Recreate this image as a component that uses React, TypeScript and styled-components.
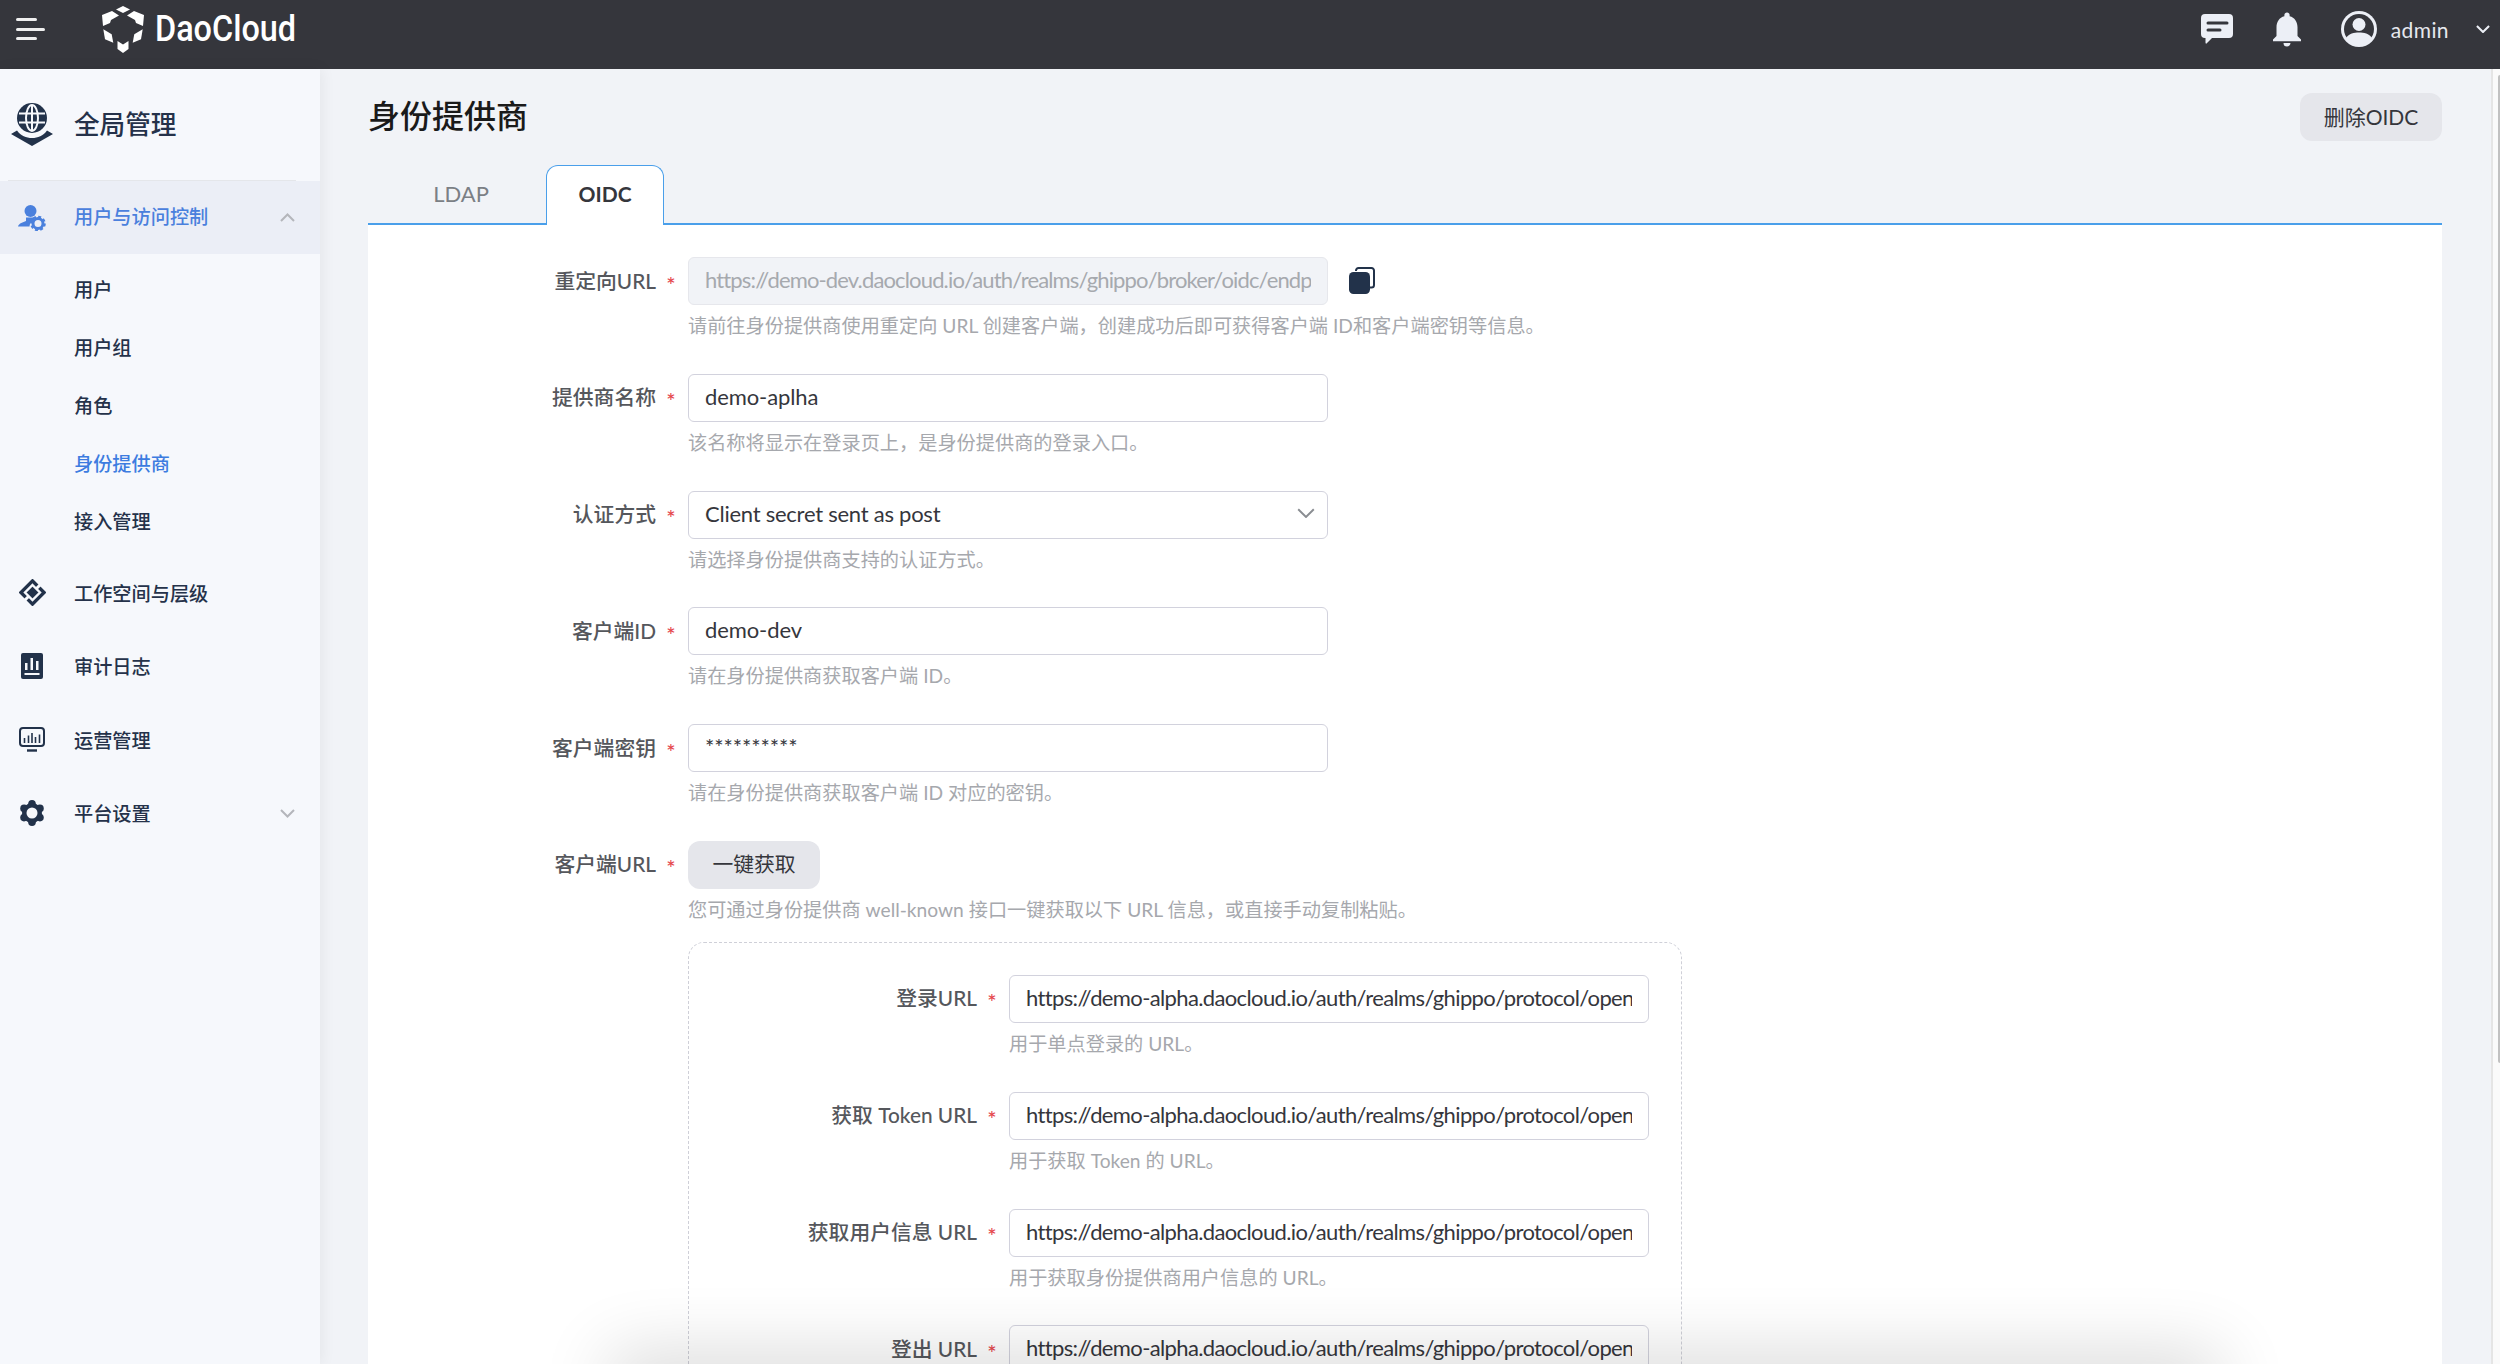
import React from "react";
import styled, { createGlobalStyle } from "styled-components";
import { MdNotifications } from "react-icons/md";

const FONT = `Lato, "Noto Sans CJK SC", sans-serif`;

const GlobalStyle = createGlobalStyle`
  html, body {
    margin: 0;
    padding: 0;
    background: #f1f3f7;
    font-family: ${FONT};
  }
  * {
    box-sizing: border-box;
  }
`;

const Page = styled.div`
  display: flex;
  flex-direction: column;
  height: 100vh;
  overflow: hidden;
  position: relative;
`;

const TopBar = styled.header`
  flex: 0 0 69px;
  display: flex;
  align-items: center;
  padding-bottom: 11px;
  background: #35363c;
  color: #eceff6;
`;

const Burger = styled.div`
  display: flex;
  flex-direction: column;
  gap: 6.5px;
  margin-left: 16px;
  width: 29px;
`;

const BurgerBar = styled.span<{ $w: number }>`
  display: block;
  height: 3px;
  border-radius: 2px;
  background: #f0f0f0;
  width: ${(p) => p.$w}px;
`;

const Logo = styled.div`
  display: flex;
  align-items: center;
  margin-left: 56px;
`;

const LogoText = styled.span`
  display: inline-block;
  font-family: Roboto, sans-serif;
  font-weight: 500;
  font-size: 36px;
  color: #fff;
  margin-left: 10px;
  transform: scaleX(0.9);
  transform-origin: left center;
`;

const TopRight = styled.div`
  margin-left: auto;
  display: flex;
  align-items: center;
  padding-right: 10px;
`;

const Bell = styled(MdNotifications)`
  margin: 0 33px;
  color: #eceff6;
`;

const UserName = styled.span`
  font-size: 21px;
  color: #e6e8ee;
  margin-left: 14px;
  margin-right: 27px;
  letter-spacing: 0.4px;
`;

const Body = styled.div`
  flex: 1;
  display: flex;
  min-height: 0;
`;

const Sidebar = styled.aside`
  flex: 0 0 320px;
  background: #f6f8fc;
  box-shadow: 2px 0 14px rgba(0, 0, 0, 0.06);
  position: relative;
  z-index: 1;
`;

const SideHead = styled.div`
  height: 112px;
  margin: 0 24px 0 8px;
  display: flex;
  align-items: center;
  border-bottom: 1px solid #e4e6ea;
  font-size: 25.6px;
  font-weight: 500;
  color: #25324a;
`;

const SideHeadTitle = styled.span`
  margin-bottom: 5px;
`;

const SideHeadIcon = styled.svg`
  width: 42px;
  height: 43px;
  margin: 0 21px 0 3px;
`;

const NavItem = styled.div<{ $active?: boolean }>`
  height: ${(p) => (p.$active ? "73px" : "73.5px")};
  display: flex;
  align-items: center;
  font-size: 19.2px;
  font-weight: 500;
  color: ${(p) => (p.$active ? "#4a80dd" : "#25324a")};
  background: ${(p) => (p.$active ? "#ebeef6" : "transparent")};
  padding-right: 25px;
`;

const NavLabel = styled.span<{ $active?: boolean }>`
  margin-bottom: ${(p) => (p.$active ? "3px" : "0")};
`;

const NavIcon = styled.span`
  width: 28px;
  margin: 0 28px 0 18px;
  display: flex;
  justify-content: center;
  align-items: center;
`;

const NavChevron = styled.span`
  margin-left: auto;
  display: flex;
  color: #b4b6bb;
`;

const SubList = styled.div`
  padding: 5.5px 0 6.5px;
`;

const SubItem = styled.div<{ $active?: boolean }>`
  height: 58px;
  display: flex;
  align-items: center;
  padding-left: 74px;
  font-size: 19.2px;
  font-weight: 500;
  color: ${(p) => (p.$active ? "#3d7ce0" : "#25324a")};
`;

const Main = styled.main`
  flex: 1;
  min-width: 0;
  padding: 24px 49px 0 48px;
  overflow: hidden;
`;

const TitleRow = styled.div`
  display: flex;
  align-items: center;
  justify-content: space-between;
  height: 48px;
`;

const Title = styled.h1`
  margin: 0 0 6px;
  font-size: 32px;
  font-weight: 500;
  color: #1a1a1a;
`;

const GreyButton = styled.button`
  height: 48px;
  width: 142px;
  padding: 0 0 3px;
  border: none;
  border-radius: 12px;
  background: #e5e6eb;
  color: #35363c;
  font-family: ${FONT};
  font-size: 21px;
`;

const Tabs = styled.div`
  display: flex;
  margin-top: 24px;
  height: 60px;
  border-bottom: 2px solid #4a9fea;
`;

const Tab = styled.div<{ $active?: boolean }>`
  width: ${(p) => (p.$active ? "118px" : "178px")};
  height: ${(p) => (p.$active ? "60px" : "58px")};
  display: flex;
  align-items: center;
  justify-content: center;
  padding: ${(p) => (p.$active ? "0 0 4px" : "0 0 2px 8px")};
  font-size: ${(p) => (p.$active ? "21px" : "22px")};
  font-weight: ${(p) => (p.$active ? 700 : 400)};
  color: ${(p) => (p.$active ? "#35363c" : "#7b7f85")};
  background: ${(p) => (p.$active ? "#fff" : "transparent")};
  border: ${(p) => (p.$active ? "1.5px solid #4a9fea" : "none")};
  border-bottom: none;
  border-radius: 12px 12px 0 0;
`;

const Panel = styled.section`
  background: #fff;
  padding-top: 32px;
  height: 1300px;
`;

const FormItem = styled.div`
  display: grid;
  grid-template-columns: 320px 640px;
  margin-bottom: 34.8px;
`;

const Label = styled.label`
  height: 48px;
  display: flex;
  align-items: center;
  justify-content: flex-end;
  padding-bottom: 3px;
  font-size: 20.8px;
  font-weight: 500;
  color: #55575c;
`;

const Star = styled.span`
  width: 30px;
  margin-right: 2px;
  padding-top: 10px;
  text-align: center;
  font-size: 22px;
  line-height: 24px;
  color: #e5484d;
`;

const TextInput = styled.input<{ $spacing?: number }>`
  display: block;
  width: 100%;
  height: 48px;
  padding: 0 16px 3px;
  border: 1.5px solid #d2d2dd;
  border-radius: 6px;
  background: #fff;
  color: #35363c;
  font-family: ${FONT};
  font-size: 22px;
  letter-spacing: ${(p) => p.$spacing ?? -0.1}px;
  outline: none;
  &:disabled {
    background: #f1f3f7;
    border-color: #e6e7ec;
    color: #a6a9ae;
  }
`;

const SelectBox = styled.div`
  height: 48px;
  display: flex;
  align-items: center;
  justify-content: space-between;
  padding: 0 12px 3px 16px;
  border: 1.5px solid #d2d2dd;
  border-radius: 6px;
  color: #35363c;
  font-size: 22px;
  letter-spacing: -0.25px;
`;

const SelectArrow = styled.span`
  display: flex;
  color: #8a8d92;
`;

const Help = styled.div`
  margin-top: 8px;
  height: 26px;
  line-height: 26px;
  font-size: 19.2px;
  color: #a6a8ad;
  white-space: nowrap;
`;

const InputWrap = styled.div`
  position: relative;
`;

const CopyIcon = styled.svg`
  position: absolute;
  left: 661px;
  top: 10px;
  width: 26px;
  height: 27px;
`;

const FetchButton = styled(GreyButton)`
  display: block;
  width: 132px;
  font-size: 20.8px;
`;

const UrlBox = styled.div`
  margin-top: 19px;
  width: 994px;
  padding-top: 32px;
  border: 1px dashed #cfd0d8;
  border-radius: 16px;
`;

const ScrollTrack = styled.div`
  flex: 0 0 9px;
  background: #fafafa;
  border-left: 2px solid #e5e5e5;
  padding: 6px 0 0 5px;
`;

const ScrollThumb = styled.div`
  width: 2px;
  height: 988px;
  background: #c1c1c1;
  border-radius: 2px 0 0 2px;
`;

const BottomShade = styled.div`
  position: absolute;
  left: 620px;
  right: 290px;
  bottom: -40px;
  height: 40px;
  pointer-events: none;
  box-shadow: 0 0 70px 10px rgba(0, 0, 0, 0.16);
`;

const DARK = "#22324a";

const Chevron = ({ up, size, width = 2 }: { up?: boolean; size: number; width?: number }) => (
  <svg width={size} height={size * 0.6} viewBox="0 0 15 9" fill="none" stroke="currentColor" strokeWidth={width}>
    <path d={up ? "M1 8L7.500 1.500L14 8" : "M1 1L7.500 7.500L14 1"} />
  </svg>
);

const LogoMark = () => (
  <svg width="44" height="47" viewBox="0 0 44 47" fill="#fff">
    <path d="M22 0L29 3.500L22 7L15 3.500Z" />
    <path d="M1 9L11 5L18 9.500L10 14L9 17L2 20Z" />
    <path d="M43 9L33 5L26 9.500L34 14L35 17L42 20Z" />
    <path d="M2.300 23.300L10.700 28.300L12.300 36.700L4 33.300Z" />
    <path d="M41.700 23.300L33.300 28.300L31.700 36.700L40 33.300Z" />
    <path d="M16.500 35L22 38.500L27.500 35V43L22 47L16.500 43Z" />
  </svg>
);

const ChatIcon = () => (
  <svg width="32" height="30" viewBox="0 0 32 30">
    <path
      fill="#eceff6"
      d="M4 0H28a4 4 0 0 1 4 4V20a4 4 0 0 1-4 4H11L5.500 29.500Q4.500 30 4.500 28.500V24H4a4 4 0 0 1-4-4V4a4 4 0 0 1 4-4Z"
    />
    <path stroke="#35363c" strokeWidth="3" strokeLinecap="round" d="M7 9H26M7 16H19" />
  </svg>
);

const AvatarIcon = () => (
  <svg width="36" height="36" viewBox="0 0 36 36">
    <circle cx="18" cy="18" r="18" fill="#eceff6" />
    <circle cx="18" cy="18" r="15" fill="#35363c" />
    <circle cx="18" cy="13.500" r="6.500" fill="#eceff6" />
    <path fill="#eceff6" d="M5 27C8 22.500 13 21.500 18 21.500S28 22.500 31 27L26 33H10Z" />
  </svg>
);

const GlobeIcon = () => (
  <SideHeadIcon viewBox="0 0 42 43">
    <circle cx="21" cy="15" r="15" fill={DARK} />
    <g fill="none" stroke="#f6f8fc" strokeWidth="2">
      <ellipse cx="21" cy="15" rx="6" ry="13" />
      <path d="M8 10.500H34M8 19.500H34M21 2V28" />
    </g>
    <path fill={DARK} d="M0 31L6 27.500C10 33 15 35 21 35S32 33 36 27.500L42 31L21 43Z" />
  </SideHeadIcon>
);

const UserGearIcon = () => (
  <svg width="28" height="26" viewBox="0 0 28 26" fill="#4a80dd">
    <circle cx="12.500" cy="6" r="6" />
    <path d="M0 21.500C1 18 5 17.500 8 16V12.500H16V15C13 17 11.500 19 11.500 21.500Z" />
    <circle cx="20" cy="18.500" r="5" fill="none" stroke="#4a80dd" strokeWidth="3" />
    <circle cx="20" cy="18.500" r="6.800" fill="none" stroke="#4a80dd" strokeWidth="2" strokeDasharray="3 2.340" />
  </svg>
);

const DiamondIcon = () => (
  <svg width="27" height="27" viewBox="0 0 27 27">
    <path fill={DARK} stroke={DARK} strokeLinejoin="round" strokeWidth="2" d="M13.500 1L26 13.500L13.500 26L1 13.500Z" />
    <path fill="none" stroke="#f6f8fc" strokeWidth="2.400" d="M13.500 6L21 13.500L13.500 21L6 13.500Z" />
    <path stroke="#f6f8fc" strokeWidth="3" d="M17 10L24 3M10 17L3 24" />
  </svg>
);

const AuditIcon = () => (
  <svg width="22" height="26" viewBox="0 0 22 26">
    <rect width="22" height="26" rx="2" fill={DARK} />
    <path fill="#f6f8fc" d="M4 10H6.500V17H4ZM9.500 5H12V17H9.500ZM15 8H17.500V17H15ZM3.500 20H18.500V22H3.500Z" />
  </svg>
);

const OpsIcon = () => (
  <svg width="26" height="25" viewBox="0 0 26 25" fill="none" stroke={DARK} strokeWidth="2">
    <rect x="1" y="1" width="24" height="18" rx="3" />
    <path d="M5.500 16V11M9.500 16V8.500M13 16V6M16.500 16V10M20.500 16V7.500" strokeWidth="1.600" />
    <path d="M8 23.500H18" strokeWidth="2.400" />
  </svg>
);

const GearIcon = () => (
  <svg width="26" height="26" viewBox="0 0 26 26" fill={DARK}>
    <circle cx="13" cy="13" r="10" />
    {[30, 90, 150, 210, 270, 330].map((a) => (
      <circle
        key={a}
        cx={13 + 9.2 * Math.cos((a * Math.PI) / 180)}
        cy={13 + 9.2 * Math.sin((a * Math.PI) / 180)}
        r="3.800"
      />
    ))}
    <circle cx="13" cy="13" r="5.500" fill="#f6f8fc" />
  </svg>
);

type Field = { label: string; value: string; help: string };

const BASE_URL = "https://demo-alpha.daocloud.io/auth/realms/ghippo/protocol/openid-connect";

const urlFields: Field[] = [
  { label: "登录URL", value: `${BASE_URL}/auth`, help: "用于单点登录的 URL。" },
  { label: "获取 Token URL", value: `${BASE_URL}/token`, help: "用于获取 Token 的 URL。" },
  { label: "获取用户信息 URL", value: `${BASE_URL}/userinfo`, help: "用于获取身份提供商用户信息的 URL。" },
  { label: "登出 URL", value: `${BASE_URL}/logout`, help: "用于单点登出的 URL。" },
];

const subItems = ["用户", "用户组", "角色", "身份提供商", "接入管理"];

function FieldLabel({ children }: { children: React.ReactNode }) {
  return (
    <Label>
      {children}
      <Star>*</Star>
    </Label>
  );
}

export default function App() {
  return (
    <Page>
      <GlobalStyle />
      <TopBar>
        <Burger>
          <BurgerBar $w={21} />
          <BurgerBar $w={29} />
          <BurgerBar $w={21} />
        </Burger>
        <Logo>
          <LogoMark />
          <LogoText>DaoCloud</LogoText>
        </Logo>
        <TopRight>
          <ChatIcon />
          <Bell size={42} />
          <AvatarIcon />
          <UserName>admin</UserName>
          <Chevron size={14} width={2.2} />
        </TopRight>
      </TopBar>
      <Body>
        <Sidebar>
          <SideHead>
            <GlobeIcon />
            <SideHeadTitle>全局管理</SideHeadTitle>
          </SideHead>
          <NavItem $active>
            <NavIcon>
              <UserGearIcon />
            </NavIcon>
            <NavLabel $active>用户与访问控制</NavLabel>
            <NavChevron>
              <Chevron up size={15} />
            </NavChevron>
          </NavItem>
          <SubList>
            {subItems.map((s) => (
              <SubItem key={s} $active={s === "身份提供商"}>
                {s}
              </SubItem>
            ))}
          </SubList>
          <NavItem>
            <NavIcon>
              <DiamondIcon />
            </NavIcon>
            <NavLabel>工作空间与层级</NavLabel>
          </NavItem>
          <NavItem>
            <NavIcon>
              <AuditIcon />
            </NavIcon>
            <NavLabel>审计日志</NavLabel>
          </NavItem>
          <NavItem>
            <NavIcon>
              <OpsIcon />
            </NavIcon>
            <NavLabel>运营管理</NavLabel>
          </NavItem>
          <NavItem>
            <NavIcon>
              <GearIcon />
            </NavIcon>
            <NavLabel>平台设置</NavLabel>
            <NavChevron>
              <Chevron size={15} />
            </NavChevron>
          </NavItem>
        </Sidebar>
        <Main>
          <TitleRow>
            <Title>身份提供商</Title>
            <GreyButton>删除OIDC</GreyButton>
          </TitleRow>
          <Tabs>
            <Tab>LDAP</Tab>
            <Tab $active>OIDC</Tab>
          </Tabs>
          <Panel>
            <FormItem>
              <FieldLabel>重定向URL</FieldLabel>
              <div>
                <InputWrap>
                  <TextInput
                    $spacing={-0.85}
                    disabled
                    value="https://demo-dev.daocloud.io/auth/realms/ghippo/broker/oidc/endpoint"
                    readOnly
                  />
                  <CopyIcon viewBox="0 0 26 27">
                    <path
                      fill="none"
                      stroke={DARK}
                      strokeWidth="2"
                      d="M7 4V3.500A2.500 2.500 0 0 1 9.500 1H22.500A2.500 2.500 0 0 1 25 3.500V18A2.500 2.500 0 0 1 22.500 20.500H21"
                    />
                    <rect x="0" y="5" width="21" height="22" rx="4.500" fill={DARK} />
                  </CopyIcon>
                </InputWrap>
                <Help>请前往身份提供商使用重定向 URL 创建客户端，创建成功后即可获得客户端 ID和客户端密钥等信息。</Help>
              </div>
            </FormItem>
            <FormItem>
              <FieldLabel>提供商名称</FieldLabel>
              <div>
                <TextInput value="demo-aplha" readOnly />
                <Help>该名称将显示在登录页上，是身份提供商的登录入口。</Help>
              </div>
            </FormItem>
            <FormItem>
              <FieldLabel>认证方式</FieldLabel>
              <div>
                <SelectBox>
                  Client secret sent as post
                  <SelectArrow>
                    <Chevron size={18} width={1.6} />
                  </SelectArrow>
                </SelectBox>
                <Help>请选择身份提供商支持的认证方式。</Help>
              </div>
            </FormItem>
            <FormItem>
              <FieldLabel>客户端ID</FieldLabel>
              <div>
                <TextInput value="demo-dev" readOnly />
                <Help>请在身份提供商获取客户端 ID。</Help>
              </div>
            </FormItem>
            <FormItem>
              <FieldLabel>客户端密钥</FieldLabel>
              <div>
                <TextInput value="**********" readOnly />
                <Help>请在身份提供商获取客户端 ID 对应的密钥。</Help>
              </div>
            </FormItem>
            <FormItem>
              <FieldLabel>客户端URL</FieldLabel>
              <div>
                <FetchButton>一键获取</FetchButton>
                <Help>您可通过身份提供商 well-known 接口一键获取以下 URL 信息，或直接手动复制粘贴。</Help>
                <UrlBox>
                  {urlFields.map((f) => (
                    <FormItem key={f.label}>
                      <FieldLabel>{f.label}</FieldLabel>
                      <div>
                        <TextInput $spacing={-0.63} value={f.value} readOnly />
                        <Help>{f.help}</Help>
                      </div>
                    </FormItem>
                  ))}
                </UrlBox>
              </div>
            </FormItem>
          </Panel>
        </Main>
        <ScrollTrack>
          <ScrollThumb />
        </ScrollTrack>
      </Body>
      <BottomShade />
    </Page>
  );
}
